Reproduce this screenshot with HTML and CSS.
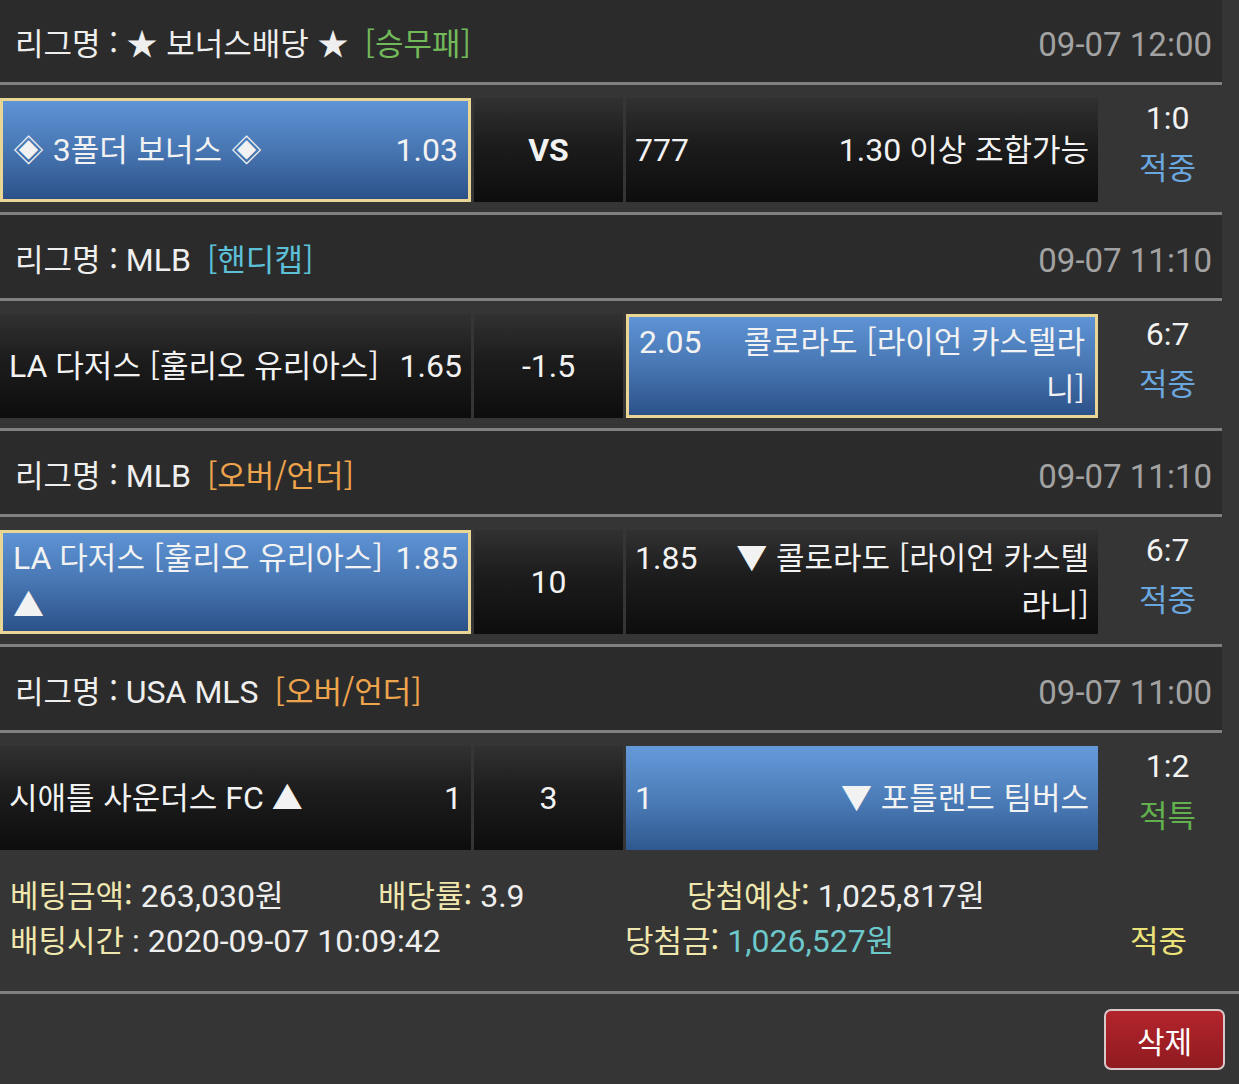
FILE: index.html
```html
<!DOCTYPE html>
<html lang="ko">
<head>
<meta charset="utf-8">
<title>베팅내역</title>
<link rel="stylesheet" href="styles.css">
</head>
<body>
<div class="board">
  <div class="hdr first">
    <div class="league"><span class="k">리그명 : ★ 보너스배당 ★</span> <span class="tag green"><span class="k">[승무패]</span></span></div>
    <div class="time">09-07 12:00</div>
  </div>
  <div class="match">
    <div class="cell sel"><div class="in"><span class="odds-r">1.03</span><span class="k">◈ </span>3<span class="k">폴더 보너스 ◈</span></div></div>
    <div class="cell mid"><b>VS</b></div>
    <div class="cell"><div class="in right"><span class="odds-l">777</span>1.30 <span class="k">이상 조합가능</span></div></div>
    <div class="score"><span>1:0</span><span class="k res blue">적중</span></div>
  </div>

  <div class="hdr">
    <div class="league"><span class="k">리그명 :</span> MLB <span class="tag cyan"><span class="k">[핸디캡]</span></span></div>
    <div class="time">09-07 11:10</div>
  </div>
  <div class="match">
    <div class="cell"><div class="in"><span class="odds-r">1.65</span>LA <span class="k">다저스 [훌리오 유리아스]</span></div></div>
    <div class="cell mid">-1.5</div>
    <div class="cell sel"><div class="in right"><span class="odds-l">2.05</span><span class="k">콜로라도 [라이언 카스텔라니]</span></div></div>
    <div class="score"><span>6:7</span><span class="k res blue">적중</span></div>
  </div>

  <div class="hdr">
    <div class="league"><span class="k">리그명 :</span> MLB <span class="tag orange"><span class="k">[오버/언더]</span></span></div>
    <div class="time">09-07 11:10</div>
  </div>
  <div class="match">
    <div class="cell sel"><div class="in"><span class="odds-r">1.85</span>LA <span class="k">다저스 [훌리오 유리아스] ▲</span></div></div>
    <div class="cell mid">10</div>
    <div class="cell"><div class="in right"><span class="odds-l">1.85</span><span class="k">▼ 콜로라도 [라이언 카스텔라니]</span></div></div>
    <div class="score"><span>6:7</span><span class="k res blue">적중</span></div>
  </div>

  <div class="hdr">
    <div class="league"><span class="k">리그명 :</span> USA MLS <span class="tag orange"><span class="k">[오버/언더]</span></span></div>
    <div class="time">09-07 11:00</div>
  </div>
  <div class="match">
    <div class="cell"><div class="in"><span class="odds-r">1</span><span class="k">시애틀 사운더스</span> FC <span class="k">▲</span></div></div>
    <div class="cell mid">3</div>
    <div class="cell blue"><div class="in right"><span class="odds-l">1</span><span class="k">▼ 포틀랜드 팀버스</span></div></div>
    <div class="score"><span>1:2</span><span class="k res green">적특</span></div>
  </div>
</div>

<div class="summary">
  <div class="sline l1">
    <div><span class="k lab">베팅금액:</span> 263,030<span class="k">원</span></div>
    <div><span class="k lab">배당률:</span> 3.9</div>
    <div><span class="k lab">당첨예상:</span> 1,025,817<span class="k">원</span></div>
  </div>
  <div class="sline l2">
    <div><span class="k lab">배팅시간</span> : 2020-09-07 10:09:42</div>
    <div><span class="k lab">당첨금:</span> <span class="cyanv">1,026,527<span class="k">원</span></span></div>
    <div><span class="k yel">적중</span></div>
  </div>
</div>

<div class="actions">
  <button class="del" type="button">삭제</button>
</div>
</body>
</html>
```

FILE: styles.css
```css
html, body {
  margin: 0;
  padding: 0;
}

body {
  background: #353535;
  color: #eeeeee;
  font-family: Roboto, "Noto Sans CJK KR", sans-serif;
  font-size: 32px;
  line-height: 47px;
  width: 1239px;
  height: 1084px;
  overflow: hidden;
}

.k {
  font-family: "Noto Sans CJK KR", sans-serif;
  font-size: 31px;
  line-height: 1;
}

.board {
  width: 1222px;
  margin-top: -1px;
}

.hdr {
  height: 83px;
  background: #2b2b2b;
  border-top: 3px solid #808080;
  border-bottom: 3px solid #808080;
  display: flex;
  align-items: center;
  justify-content: space-between;
  padding: 0 10px 0 15px;
}

.hdr.first {
  border-top: none;
}

.league {
  color: #efefef;
  padding-top: 7px;
}

.tag {
  margin-left: 8px;
}

.tag.green { color: #72b95a; }
.tag.cyan { color: #5bc0d8; }
.tag.orange { color: #eea44c; }

.time {
  color: #a2a2a2;
  padding-top: 7px;
  font-size: 33px;
}

.match {
  display: grid;
  grid-template-columns: 471px 149px 472px 121px;
  column-gap: 3px;
  height: 104px;
  padding: 13px 0 10px;
}

.cell {
  box-sizing: border-box;
  height: 104px;
  padding: 0 9px;
  display: flex;
  align-items: center;
  background: linear-gradient(#313131 0%, #1c1c1c 45%, #0d0d0d 100%);
  color: #f2f2f2;
}

.cell.sel {
  background: linear-gradient(#5e93d5 0%, #4776b2 50%, #2c5189 100%);
  border: 3px solid #e9d695;
  padding: 0 10px;
}

.cell.blue {
  background: linear-gradient(#659ad9 0%, #4c7db9 50%, #2f588f 100%);
}

.cell.mid {
  justify-content: center;
}

.cell.mid b {
  font-weight: 700;
}

.in {
  width: 100%;
}

.in.right {
  text-align: right;
}

.odds-r {
  float: right;
  margin-left: 8px;
}

.odds-l {
  float: left;
  margin-right: 16px;
}

.score {
  display: flex;
  flex-direction: column;
  align-items: center;
  padding-left: 12px;
  margin-top: -3px;
  color: #f2f2f2;
}

.score > span {
  line-height: 47px;
}

.res.blue { color: #6ba7df; }
.res.green { color: #62b04e; }

.summary {
  padding: 14px 10px 27px;
  line-height: 45px;
  border-bottom: 3px solid #808080;
}

.sline {
  display: grid;
}

.l1 {
  grid-template-columns: 368px 309px auto;
}

.l2 {
  grid-template-columns: 615px 505px auto;
}

.lab { color: #efe7ae; }
.cyanv { color: #6dc8cb; }
.yel { color: #ece27a; }

.actions {
  display: flex;
  justify-content: flex-end;
  padding: 15px 14px 0 0;
}

.del {
  width: 121px;
  height: 61px;
  box-sizing: border-box;
  border: 2px solid #d9c8ca;
  border-radius: 7px;
  background: linear-gradient(#b3252c, #8f1b20);
  color: #ffffff;
  font-family: "Noto Sans CJK KR", sans-serif;
  font-size: 30px;
  line-height: 1;
  padding: 0;
}
```
